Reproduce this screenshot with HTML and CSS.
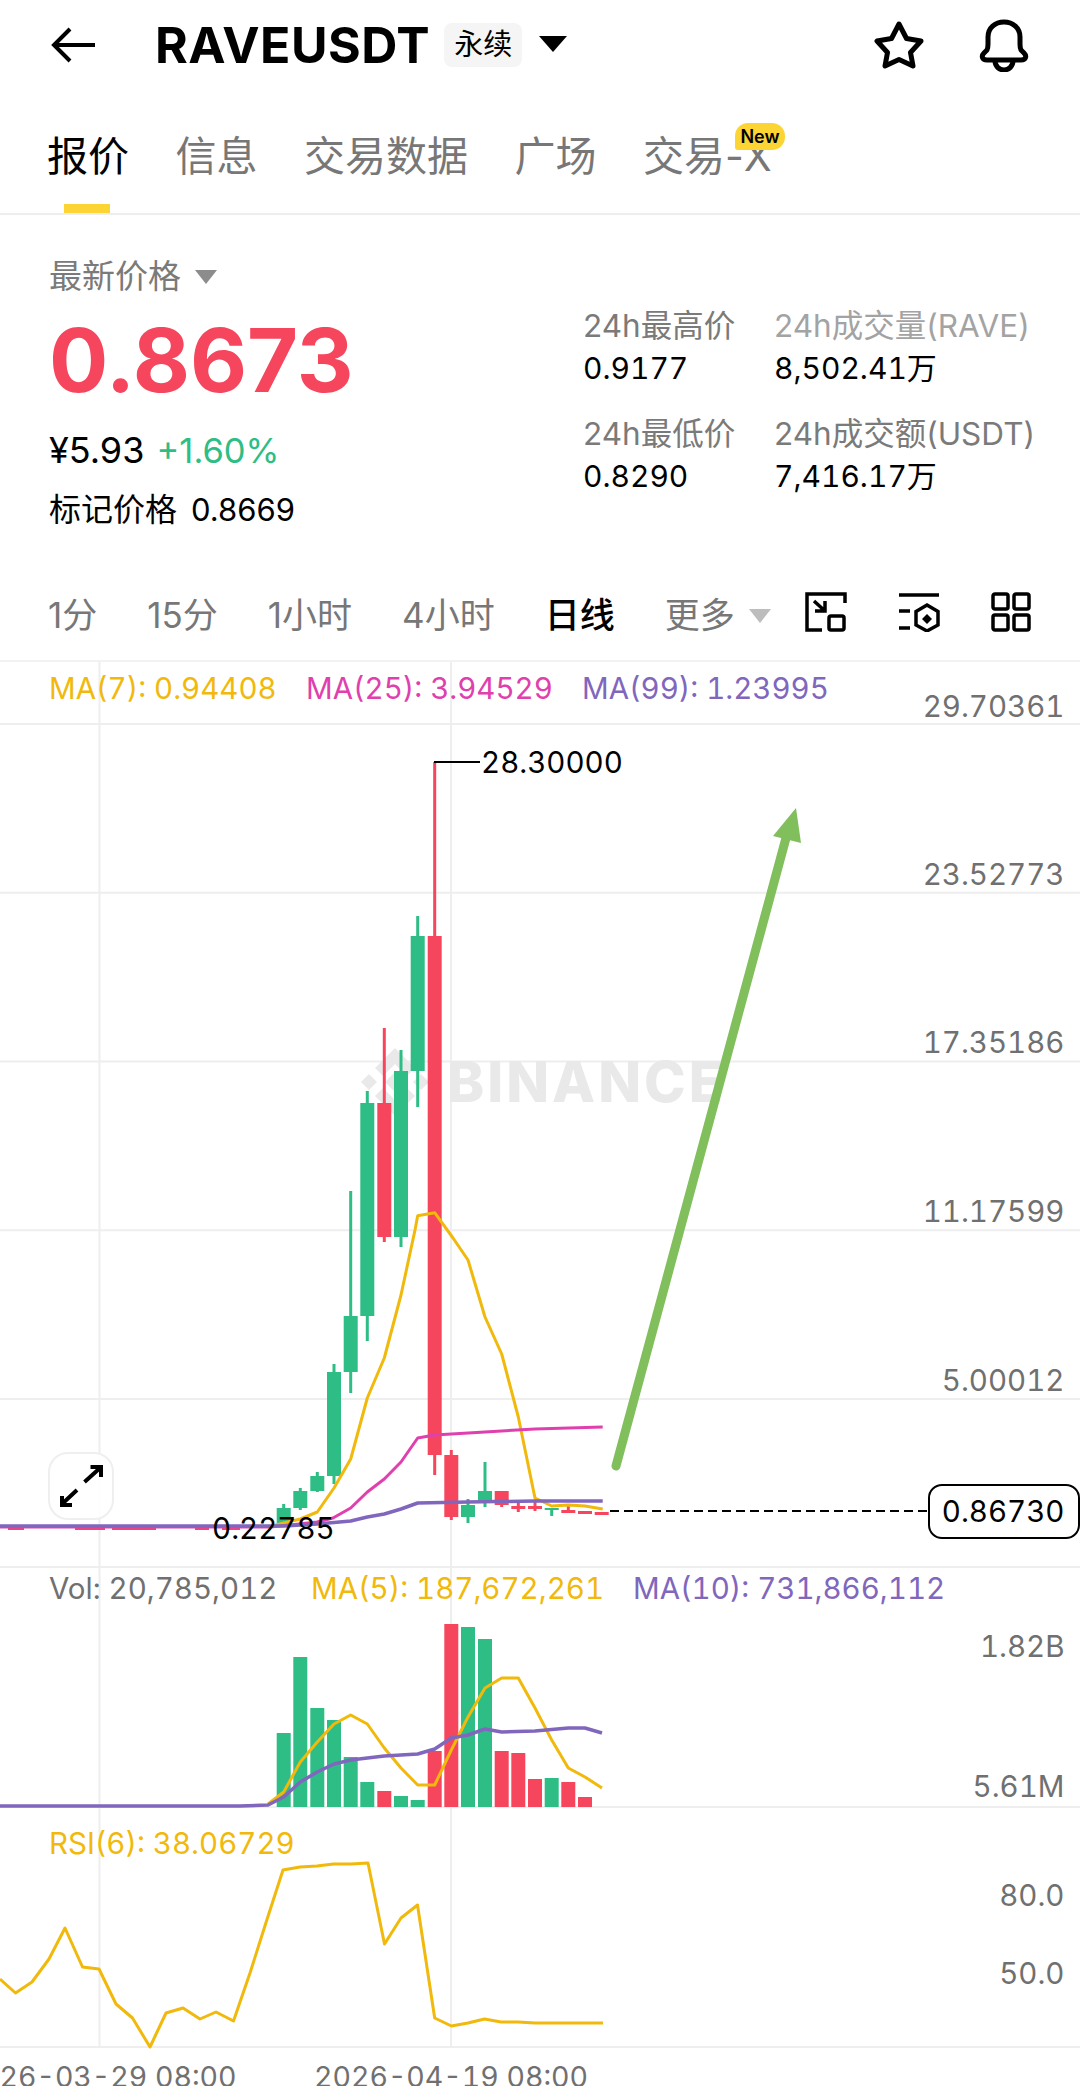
FILE: index.html
```html
<!DOCTYPE html>
<html lang="zh-CN">
<head>
    <meta charset="UTF-8">
    <meta name="viewport" content="width=device-width, initial-scale=1.0">
    <title>RAVEUSDT 永续</title>
    <link rel="stylesheet" href="styles.css">
</head>
<body>
    <header class="topbar">
        <svg class="back-icon" width="46" height="36" viewBox="0 0 46 36"><path d="M44 18H3M19 2 3 18l16 16"/></svg>
        <h1 class="symbol">RAVEUSDT</h1>
        <span class="symbol-tag">永续</span>
        <span class="caret caret-black"></span>
        <svg class="star-icon" width="50" height="48" viewBox="0 0 50 48"><path d="M25 3l7.500 14.500L47 20 36.500 31.500 39 45 25 38.500 11 45l2.500-13.500L3 20l14.500-2.500z"/></svg>
        <svg class="bell-icon" width="50" height="53" viewBox="0 0 50 53"><path d="M8 41h34c5 0 6-4 3-7l-3-3c-1-2-1-4-1-6v-7C41 9 34 3 25 3S9 9 9 18v7c0 2 0 4-1 6l-3 3c-3 3-2 7 3 7zM16 42a9 9 0 0 0 18 0"/></svg>
    </header>

    <nav class="tabs">
        <a class="tab active">报价</a>
        <a class="tab">信息</a>
        <a class="tab">交易数据</a>
        <a class="tab">广场</a>
        <a class="tab">交易-X<span class="new-badge">New</span></a>
    </nav>

    <section class="quote">
        <div class="quote-main">
            <div class="price-label">最新价格<span class="caret caret-grey"></span></div>
            <div class="last-price">0.8673</div>
            <div class="fiat-row">¥5.93 <span class="change">+1.60%</span></div>
            <div class="mark-row">标记价格 <span class="mark-value">0.8669</span></div>
        </div>
        <div class="stats">
            <div class="stat"><div class="stat-label">24h最高价</div><div class="stat-value">0.9177</div></div>
            <div class="stat"><div class="stat-label light">24h成交量(RAVE)</div><div class="stat-value">8,502.41万</div></div>
            <div class="stat"><div class="stat-label">24h最低价</div><div class="stat-value">0.8290</div></div>
            <div class="stat"><div class="stat-label">24h成交额(USDT)</div><div class="stat-value">7,416.17万</div></div>
        </div>
    </section>

    <div class="intervals">
        <div class="interval-list">
            <span class="interval">1分</span>
            <span class="interval">15分</span>
            <span class="interval">1小时</span>
            <span class="interval">4小时</span>
            <span class="interval current">日线</span>
            <span class="interval">更多<span class="caret caret-light"></span></span>
        </div>
        <div class="chart-tools">
            <svg width="42" height="40" viewBox="0 0 42 40"><path d="M17 38H2V2h38v9M9 9l11 10M10 19h10V9"/><rect x="24" y="24" width="15" height="14" rx="2"/></svg>
            <svg width="42" height="40" viewBox="0 0 42 40"><path d="M1 3h40M1 19h11M1 36h11M29 13l11 6.500V33l-11 6-11-6V19.500z"/><path class="solid" d="M29 22l5 5-5 5-5-5z"/></svg>
            <svg width="40" height="40" viewBox="0 0 40 40"><rect x="2" y="2" width="15" height="15" rx="2"/><rect x="23" y="2" width="15" height="15" rx="2"/><rect x="2" y="23" width="15" height="15" rx="2"/><rect x="23" y="23" width="15" height="15" rx="2"/></svg>
        </div>
    </div>

    <svg class="chart" width="1080" height="1424" viewBox="0 662 1080 1424">
        <!-- grid -->
        <g class="grid">
            <path d="M0 724H1080M0 892.800H1080M0 1061.500H1080M0 1230.200H1080M0 1399H1080M0 1567H1080M0 1807H1080M0 2047H1080"/>
            <path d="M99.500 662V2047M451 662V2047"/>
        </g>

        <!-- watermark -->
        <g class="watermark">
            <path transform="translate(395 1082)" d="M0-34 20-14 12-6 0-18-12-6-20-14zM0 34 20 14 12 6 0 18-12 6-20 14zM0-10 10 0 0 10-10 0zM-26-8-18 0-26 8-34 0zM26-8 34 0 26 8 18 0z"/>
            <text x="447" y="1102" class="watermark-text">BINANCE</text>
        </g>

        <!-- old flat candles -->
        <g class="down">
            <rect x="8" y="1527" width="16" height="3"/><rect x="75" y="1527" width="30" height="3"/><rect x="112" y="1527" width="44" height="3"/><rect x="195" y="1527" width="14" height="3"/><rect x="222" y="1527" width="18" height="3"/>
        </g>

        <!-- candles -->
        <g class="up">
            <rect x="282.200" y="1504" width="3" height="20"/><rect x="276.700" y="1508" width="14" height="18"/>
            <rect x="298.800" y="1488" width="3" height="22"/><rect x="293.300" y="1491" width="14" height="17"/>
            <rect x="315.800" y="1472" width="3" height="20"/><rect x="310.300" y="1476" width="14" height="15"/>
            <rect x="332.500" y="1364" width="3" height="120"/><rect x="327" y="1372" width="14" height="104"/>
            <rect x="349.200" y="1191" width="3" height="202"/><rect x="343.700" y="1316" width="14" height="56"/>
            <rect x="365.800" y="1091" width="3" height="250"/><rect x="360.300" y="1103" width="14" height="213"/>
            <rect x="399.500" y="1050" width="3" height="197"/><rect x="394" y="1071" width="14" height="166"/>
            <rect x="416.200" y="916" width="3" height="191"/><rect x="410.700" y="936" width="14" height="135"/>
            <rect x="466.500" y="1499" width="3" height="24"/><rect x="461" y="1505" width="14" height="12"/>
            <rect x="483.500" y="1462" width="3" height="45"/><rect x="478" y="1491" width="14" height="12"/>
            <rect x="550.200" y="1508" width="3" height="8"/><rect x="544.700" y="1508" width="14" height="2"/>
        </g>
        <g class="down">
            <rect x="382.800" y="1028" width="3" height="214"/><rect x="377.300" y="1103" width="14" height="134"/>
            <rect x="433.200" y="762" width="3" height="713"/><rect x="427.700" y="936" width="14" height="519"/>
            <rect x="449.800" y="1450" width="3" height="70"/><rect x="444.300" y="1455" width="14" height="62"/>
            <rect x="500.200" y="1491" width="3" height="16"/><rect x="494.700" y="1491" width="14" height="14"/>
            <rect x="516.800" y="1502" width="3" height="10"/><rect x="511.300" y="1506" width="14" height="3"/>
            <rect x="533.500" y="1501" width="3" height="10"/><rect x="528" y="1506" width="14" height="3"/>
            <rect x="566.800" y="1505" width="3" height="7"/><rect x="561.300" y="1510" width="14" height="3"/>
            <rect x="578" y="1511" width="14" height="3"/>
            <rect x="594.700" y="1512" width="14" height="3"/>
        </g>

        <!-- price moving averages -->
        <polyline class="line ma7" points="272,1526 283.700,1523 300.300,1519 317.300,1512 334,1488 350.700,1459 367.300,1398 384.300,1358 401,1295 415,1230 417.700,1215.700 434.700,1212.700 453,1238 468,1260 485,1317 501.700,1354 518.300,1417 535,1498 551.700,1506 568.300,1505 585,1506 602.700,1509"/>
        <polyline class="line ma25" points="0,1527 270,1527 290,1525 317,1522 333,1518 350.700,1508 367.300,1492 384.300,1479 401,1462 417.700,1438 434.700,1435 485,1432 535,1429 602.700,1427"/>
        <polyline class="line ma99" points="0,1526 284,1526 317.300,1524 350.700,1521 367.300,1517 384.300,1514 401,1509 417.700,1503 468,1502 535,1501 602.700,1501"/>

        <!-- high and low marks -->
        <path class="leader" d="M434 762H480"/>
        <text x="481" y="773" class="mark-text">28.30000</text>
        <text x="212" y="1539" class="mark-text">0.22785</text>

        <!-- last price line -->
        <path class="last-line" d="M610 1511H928"/>
        <rect class="last-box" x="929" y="1485" width="150" height="53" rx="13"/>
        <text x="1064.500" y="1522" class="mark-text end">0.86730</text>

        <!-- expand button -->
        <rect class="expand-box" x="49" y="1453" width="64" height="66" rx="19"/>
        <path class="expand-icon" d="M84.500 1482 100 1468M90.500 1467H101V1477M77 1490 62 1504M62 1496V1505H72"/>

        <!-- right axis -->
        <g class="axis end">
            <text x="1064.500" y="717">29.70361</text>
            <text x="1064.500" y="885">23.52773</text>
            <text x="1064.500" y="1053">17.35186</text>
            <text x="1064.500" y="1222">11.17599</text>
            <text x="1064.500" y="1391">5.00012</text>
            <text x="1064.500" y="1657">1.82B</text>
            <text x="1064.500" y="1797">5.61M</text>
            <text x="1064.500" y="1906">80.0</text>
            <text x="1064.500" y="1984">50.0</text>
        </g>

        <!-- legends -->
        <text y="699" class="legend"><tspan x="49" class="c-ma7">MA(7): 0.94408</tspan><tspan x="306" class="c-ma25">MA(25): 3.94529</tspan><tspan x="582" class="c-ma99">MA(99): 1.23995</tspan></text>
        <text y="1599" class="legend"><tspan x="49" class="c-grey">Vol: 20,785,012</tspan><tspan x="311" class="c-ma7">MA(5): 187,672,261</tspan><tspan x="633" class="c-ma99">MA(10): 731,866,112</tspan></text>
        <text x="49" y="1854" class="legend c-ma7">RSI(6): 38.06729</text>

        <!-- volume -->
        <g class="up">
            <rect x="276.700" y="1733" width="14" height="74"/><rect x="293.300" y="1657" width="14" height="150"/><rect x="310.300" y="1708" width="14" height="99"/><rect x="327" y="1720" width="14" height="87"/><rect x="343.700" y="1757" width="14" height="50"/><rect x="360.300" y="1782" width="14" height="25"/><rect x="394" y="1796" width="14" height="11"/><rect x="410.700" y="1800" width="14" height="7"/><rect x="461" y="1627" width="14" height="180"/><rect x="478" y="1639" width="14" height="168"/><rect x="544.700" y="1778" width="14" height="29"/>
        </g>
        <g class="down">
            <rect x="377.300" y="1791" width="14" height="16"/><rect x="427.700" y="1751" width="14" height="56"/><rect x="444.300" y="1624" width="14" height="183"/><rect x="494.700" y="1751" width="14" height="56"/><rect x="511.300" y="1753" width="14" height="54"/><rect x="528" y="1779" width="14" height="28"/><rect x="561.300" y="1782" width="14" height="25"/><rect x="578" y="1797" width="14" height="10"/>
        </g>
        <polyline class="line ma7" points="268,1804 283.700,1792 300.300,1762 317.300,1742 334,1724 350.700,1715 367.300,1724 384.300,1748 401,1768 417.700,1785 434.700,1785 451.300,1750 468,1717 485,1688 501.700,1678 518.300,1678 535,1708 551.700,1740 568.300,1768 585,1777 602,1788"/>
        <polyline class="line ma99" points="0,1806 240,1806 268,1805 283.700,1797 300.300,1782 317.300,1772 334,1764 350.700,1760 367.300,1758 384.300,1756 401,1755 417.700,1754 434.700,1749 451.300,1738 468,1735 485,1729 501.700,1732 535,1731 568.300,1728 585,1728 602,1733"/>

        <!-- rsi -->
        <polyline class="line ma7" points="0,1979 15.500,1993 32,1982 49,1959 65,1928 82.500,1967 99,1969 116,2004 132.500,2018 150,2047 166,2013 183,2008 200,2019 216,2012 233.500,2021 250,1973 266.500,1921 283,1870 300,1867 317,1866 333.500,1864 351,1864 368,1863 384.500,1944 401,1918 417.500,1905 434.700,2018 451.400,2026 468,2023 484.500,2019 501,2022 518,2022 535,2023 552,2023 578,2023 586,2023 603,2023"/>

        <!-- time axis -->
        <g class="axis dates">
            <text x="99.500" y="2087" class="middle">2026-03-29 08:00</text>
            <text x="451" y="2087" class="middle">2026-04-19 08:00</text>
        </g>

        <!-- drawn arrow -->
        <path class="drawn-arrow" d="M616 1466 786 838"/>
        <polygon class="drawn-head" points="796,808 773,836 801,843"/>
    </svg>
</body>
</html>
```

FILE: styles.css
```css
* {
    box-sizing: border-box;
}
body {
    margin: 0;
    width: 1080px;
    height: 2086px;
    overflow: hidden;
    background-color: #fff;
    color: #000;
    font-family: Inter, "Noto Sans CJK SC", sans-serif;
}
.topbar {
    display: flex;
    align-items: center;
    height: 90px;
    padding: 0 51px 0 51px;
}
.back-icon {
    margin-right: 58px;
}
.back-icon path {
    fill: none;
    stroke: #000;
    stroke-width: 4;
}
.symbol {
    margin: 0;
    font-size: 50px;
    font-weight: 700;
    letter-spacing: 0.500px;
    line-height: 1;
}
.symbol-tag {
    margin-left: 14px;
    padding: 0 10px;
    height: 44px;
    line-height: 44px;
    font-size: 29px;
    background-color: #f5f5f5;
    border-radius: 8px;
}
.caret {
    display: inline-block;
    width: 0;
    height: 0;
    border-left: 14px solid transparent;
    border-right: 14px solid transparent;
    border-top: 16px solid #000;
}
.caret-black {
    margin-left: 17px;
    margin-top: -2px;
}
.caret-grey {
    margin-left: 14px;
    margin-bottom: 4px;
    border-width: 14px 11px 0;
    border-top-color: #8c8c8c;
}
.caret-light {
    margin-left: 14px;
    margin-bottom: 5px;
    border-width: 14px 11px 0;
    border-top-color: #bdbdbd;
}
.star-icon {
    margin-left: auto;
}
.star-icon path, .bell-icon path {
    fill: none;
    stroke: #000;
    stroke-width: 5;
    stroke-linejoin: round;
}
.bell-icon {
    margin-left: 55px;
}

.tabs {
    display: flex;
    gap: 46.500px;
    height: 125px;
    padding-left: 47px;
    border-bottom: 2px solid #eee;
}
.tab {
    position: relative;
    padding-top: 42px;
    font-size: 41px;
    line-height: 48px;
    color: #777;
}
.tab.active {
    color: #000;
}
.tab.active::after {
    content: "";
    position: absolute;
    left: 17px;
    top: 114px;
    width: 46px;
    height: 9px;
    background-color: #fcd535;
}
.new-badge {
    position: absolute;
    left: 92px;
    top: 33px;
    width: 50px;
    height: 27px;
    line-height: 27px;
    text-align: center;
    font-size: 18px;
    font-weight: 600;
    color: #000;
    background-color: #fcd535;
    border-radius: 13px 13px 13px 3px;
}

.quote {
    display: flex;
    height: 365px;
    padding-left: 49px;
}
.quote-main {
    width: 534px;
    padding-top: 39px;
}
.price-label {
    height: 44px;
    line-height: 44px;
    font-size: 33px;
    color: #7a7a7a;
}
.last-price {
    margin-top: 17px;
    height: 90px;
    line-height: 90px;
    font-size: 88px;
    font-weight: 700;
    color: #f6465d;
}
.fiat-row {
    margin-top: 25px;
    height: 40px;
    line-height: 40px;
    font-size: 36px;
}
.change {
    margin-left: 2px;
    font-size: 34.500px;
    color: #2ebd85;
}
.mark-row {
    margin-top: 20px;
    height: 40px;
    line-height: 40px;
    font-size: 32px;
}
.mark-value {
    margin-left: 5px;
    font-size: 31px;
}
.stats {
    display: grid;
    grid-template-columns: 191px auto;
    grid-auto-rows: 108px;
    padding-top: 91px;
}
.stat-label, .stat-value {
    height: 40px;
    line-height: 40px;
    white-space: nowrap;
}
.stat-label {
    font-size: 31.500px;
    color: #7a7a7a;
}
.stat-label.light {
    color: #a3a3a3;
}
.stat-value {
    font-size: 30px;
    font-variant-numeric: tabular-nums;
    padding-top: 2px;
}

.intervals {
    display: flex;
    align-items: center;
    justify-content: space-between;
    height: 82px;
    padding: 0 49px 16px 48px;
    border-bottom: 2px solid #f2f2f2;
}
.interval-list {
    display: flex;
    align-items: center;
    gap: 50px;
    font-size: 35px;
    color: #777;
    white-space: nowrap;
}
.interval.current {
    color: #000;
    font-weight: 500;
}
.chart-tools {
    display: flex;
    gap: 51px;
}
.chart-tools path, .chart-tools rect {
    fill: none;
    stroke: #000;
    stroke-width: 3.500;
}
.chart-tools path.solid {
    fill: #000;
    stroke: none;
}

.chart {
    display: block;
    font-family: Inter, sans-serif;
    font-variant-numeric: tabular-nums;
}
.grid path {
    fill: none;
    stroke: #eee;
    stroke-width: 2;
}
.watermark {
    fill: #e9e9e9;
}
.watermark-text {
    font-size: 56px;
    font-weight: 800;
    letter-spacing: 3px;
}
.up {
    fill: #2ebd85;
}
.down {
    fill: #f6465d;
}
.line {
    fill: none;
    stroke-width: 3;
    stroke-linejoin: round;
}
.line.ma7 {
    stroke: #f0b90b;
}
.line.ma25 {
    stroke: #e040ae;
}
.line.ma99 {
    stroke: #8066bd;
    stroke-width: 3.500;
}
.leader {
    fill: none;
    stroke: #000;
    stroke-width: 2;
}
.mark-text {
    font-size: 29.500px;
    fill: #000;
}
.end, .end text {
    text-anchor: end;
}
.middle {
    text-anchor: middle;
}
.last-line {
    fill: none;
    stroke: #000;
    stroke-width: 2;
    stroke-dasharray: 9 5;
}
.last-box {
    fill: #fff;
    stroke: #000;
    stroke-width: 2;
}
.expand-box {
    fill: #fff;
    fill-opacity: 0.9;
    stroke: #efefef;
    stroke-width: 2;
}
.expand-icon {
    fill: none;
    stroke: #000;
    stroke-width: 4;
}
.axis text {
    font-size: 29.500px;
    fill: #707070;
}
.axis.dates text {
    font-size: 28.500px;
}
.legend {
    font-size: 29.500px;
}
.c-ma7 {
    fill: #f0b90b;
}
.c-ma25 {
    fill: #e040ae;
}
.c-ma99 {
    fill: #8066bd;
}
.c-grey {
    fill: #707070;
}
.drawn-arrow {
    fill: none;
    stroke: #80bf5c;
    stroke-width: 9;
    stroke-linecap: round;
}
.drawn-head {
    fill: #80bf5c;
}
```
